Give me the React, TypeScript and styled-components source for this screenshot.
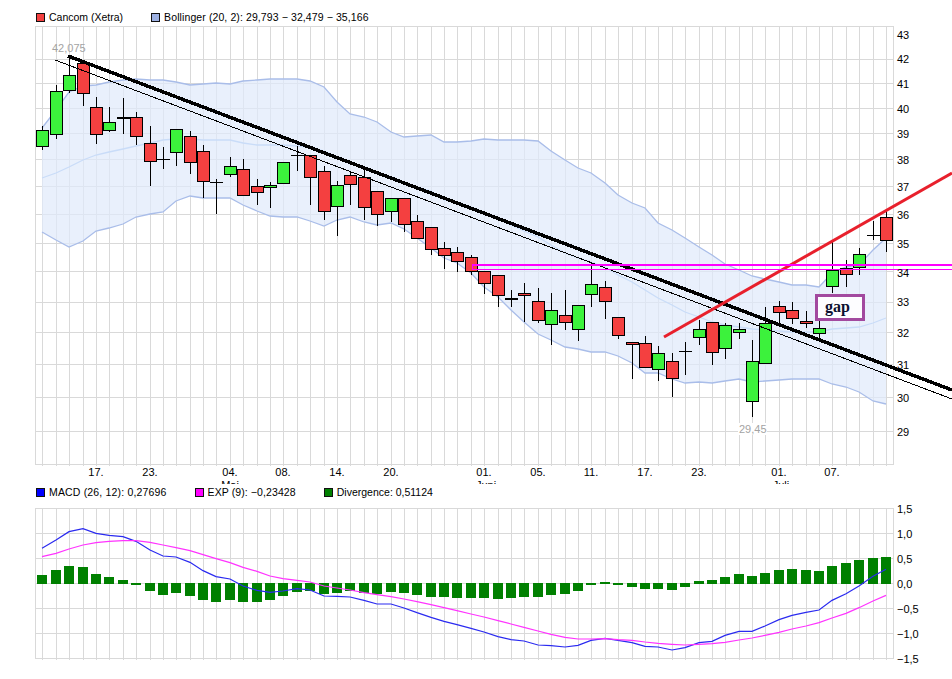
import styled, { createGlobalStyle } from 'styled-components'

const GlobalStyle = createGlobalStyle`
  html, body {
    margin: 0;
    background: #fff;
  }
`

const Page = styled.div`
  width: 952px;
  height: 679px;
  overflow: hidden;
  font-family: "Liberation Sans", Arial, sans-serif;
  font-size: 10.5px;
  color: #000;
`

const LegendRow = styled.div<{ $top: number; $height: number }>`
  display: flex;
  align-items: center;
  gap: 28px;
  box-sizing: border-box;
  height: ${(p) => p.$height}px;
  padding-top: ${(p) => p.$top}px;
  padding-left: 36px;
  position: relative;
`

const LegendItem = styled.div<{ $spacing?: number }>`
  display: flex;
  align-items: center;
  gap: 4px;
  white-space: nowrap;
  letter-spacing: ${(p) => p.$spacing ?? 0}px;
`

const Swatch = styled.span<{ $color: string }>`
  display: block;
  box-sizing: border-box;
  width: 9px;
  height: 9px;
  border: 1px solid #111;
  background: ${(p) => p.$color};
`

const ChartFrame = styled.div`
  position: relative;
`

const ChartSvg = styled.svg`
  display: block;
`

const GridLine = styled.line`
  stroke: #d9d9d9;
  stroke-width: 1;
  shape-rendering: crispEdges;
`

const BandFill = styled.polygon`
  fill: #dfe9fb;
  fill-opacity: 0.7;
  stroke: none;
`

const BandLine = styled.polyline<{ $color: string }>`
  fill: none;
  stroke: ${(p) => p.$color};
  stroke-width: 1.3;
`

const Wick = styled.line`
  stroke: #000;
  stroke-width: 1;
  shape-rendering: crispEdges;
`

const Body = styled.rect<{ $color: string }>`
  fill: ${(p) => p.$color};
  stroke: #000;
  stroke-width: 1;
  shape-rendering: crispEdges;
`

const TrendLine = styled.line<{ $width: number }>`
  stroke: #000;
  stroke-width: ${(p) => p.$width};
  shape-rendering: crispEdges;
`

const RedLine = styled.line`
  stroke: #e8202c;
  stroke-width: 3;
`

const MagentaLine = styled.polyline`
  fill: none;
  stroke: #ff00ff;
  shape-rendering: crispEdges;
`

const IndicatorLine = styled.polyline<{ $color: string }>`
  fill: none;
  stroke: ${(p) => p.$color};
  stroke-width: 1.2;
`

const Bar = styled.rect`
  fill: #008000;
  shape-rendering: crispEdges;
`

const AxisText = styled.text`
  font-family: "Liberation Sans", Arial, sans-serif;
  font-size: 11px;
  fill: #000;
`

const NoteText = styled(AxisText)`
  fill: #a3a3a3;
`

const NoteBack = styled.rect`
  fill: #fff;
`

const GapNote = styled.div`
  position: absolute;
  left: 815px;
  top: 268px;
  box-sizing: border-box;
  width: 50px;
  height: 27px;
  border: 3px solid #a2499f;
  background: #fdfdff;
  display: flex;
  align-items: center;
  justify-content: center;
  font-family: "Liberation Serif", "Times New Roman", serif;
  font-weight: bold;
  font-size: 16px;
  line-height: 1;
  color: #0d1030;
  padding-bottom: 1px;
  padding-right: 5px;
`

const xAt = (i: number) => Math.round(42.4 + 13.39 * i)

const INDEXES = Array.from({ length: 64 }, (_, i) => i)

const PRICE_ROWS = [26, 59, 83, 108, 133, 159, 186, 214, 243, 271, 302, 332, 364, 397, 431, 464]
const PRICE_LABELS: [string, number][] = [
  ['43', 35], ['42', 59], ['41', 84], ['40', 109], ['39', 134], ['38', 160], ['37', 187], ['36', 215],
  ['35', 244], ['34', 273], ['33', 302], ['32', 333], ['31', 365], ['30', 398], ['29', 432],
]
const DATE_LABELS: [string, number][] = [
  ['17.', 4], ['23.', 8], ['04.', 14], ['08.', 18], ['14.', 22], ['20.', 26], ['01.', 33],
  ['05.', 37], ['11.', 41], ['17.', 45], ['23.', 49], ['01.', 55], ['07.', 59],
]
const MONTH_LABELS: [string, number][] = [['Mai', 230], ['Juni', 486], ['Juli', 781]]

const MACD_ROWS = [508, 533, 558, 583, 608, 633, 658]
const MACD_LABELS: [string, number][] = [
  ['1,5', 509], ['1,0', 534], ['0,5', 559], ['0,0', 584], ['−0,5', 609], ['−1,0', 634], ['−1,5', 659],
]

// wick top, wick bottom, body top, body bottom, kind (r red, g green, x cross, d thick doji)
type Candle = [number, number, number, number, 'r' | 'g' | 'x' | 'd']
const CANDLES: Candle[] = [
  [126, 150, 130, 146, 'g'], [85, 139, 91, 134, 'g'], [56, 93, 75, 90, 'g'], [60, 106, 63, 93, 'r'],
  [97, 144, 107, 134, 'r'], [107, 132, 122, 130, 'g'], [98, 134, 117, 117, 'd'], [112, 145, 117, 136, 'r'],
  [126, 186, 143, 161, 'r'], [147, 169, 159, 159, 'x'], [129, 166, 129, 152, 'g'], [131, 174, 136, 162, 'r'],
  [145, 198, 151, 181, 'r'], [179, 214, 182, 182, 'x'], [157, 177, 166, 174, 'g'], [159, 195, 169, 195, 'r'],
  [179, 205, 186, 192, 'r'], [182, 208, 185, 187, 'g'], [162, 183, 162, 183, 'g'], [146, 171, 155, 155, 'x'],
  [155, 205, 155, 177, 'r'], [166, 220, 171, 211, 'r'], [181, 236, 185, 206, 'g'], [172, 205, 175, 184, 'r'],
  [169, 220, 177, 207, 'r'], [191, 226, 191, 214, 'r'], [198, 222, 198, 211, 'g'], [198, 232, 198, 224, 'r'],
  [215, 238, 221, 238, 'r'], [227, 255, 227, 249, 'r'], [242, 269, 248, 255, 'r'], [247, 272, 252, 261, 'r'],
  [255, 275, 257, 271, 'r'], [271, 294, 271, 283, 'r'], [275, 307, 275, 295, 'r'], [290, 307, 298, 299, 'g'],
  [283, 322, 293, 295, 'r'], [288, 323, 301, 320, 'r'], [293, 345, 310, 324, 'g'], [290, 330, 315, 322, 'r'],
  [305, 341, 305, 329, 'g'], [263, 307, 284, 294, 'g'], [281, 319, 287, 301, 'r'], [317, 339, 317, 335, 'r'],
  [342, 379, 342, 344, 'r'], [336, 367, 343, 367, 'r'], [346, 381, 353, 369, 'g'], [353, 397, 361, 378, 'r'],
  [342, 375, 351, 351, 'x'], [320, 345, 329, 337, 'g'], [322, 365, 322, 352, 'r'], [323, 359, 325, 348, 'g'],
  [323, 339, 329, 332, 'g'], [340, 417, 361, 401, 'g'], [307, 364, 323, 363, 'g'], [301, 323, 306, 312, 'r'],
  [302, 324, 310, 318, 'r'], [311, 328, 321, 323, 'r'], [321, 340, 328, 333, 'g'], [240, 293, 270, 286, 'g'],
  [260, 287, 268, 274, 'r'], [248, 275, 254, 267, 'g'], [221, 240, 235, 235, 'x'], [209, 252, 217, 240, 'r'],
]

const UPPER_BAND = [
  128, 110, 92, 86, 85, 82, 80, 79, 80, 80, 82, 85, 84, 83, 84, 81, 80, 79, 79, 79, 81, 87, 102, 114, 117, 122,
  132, 137, 136, 135, 142, 142, 141, 139, 140, 140, 140, 141, 151, 160, 168, 173, 183, 195, 203, 208, 223, 230,
  238, 247, 255, 264, 270, 276, 279, 282, 285, 285, 287, 273, 267, 265, 250, 238,
]
const MIDDLE_BAND = [
  178, 173, 167, 160, 155, 152, 149, 146, 143, 140, 139, 139, 140, 140, 140, 143, 145, 145, 145, 146, 147, 151,
  157, 163, 168, 173, 178, 183, 187, 191, 200, 202, 207, 213, 218, 225, 231, 237, 245, 253, 258, 262, 267, 275,
  282, 290, 298, 305, 312, 317, 322, 325, 327, 329, 330, 331, 332, 332, 332, 329, 328, 327, 323, 318,
]
const LOWER_BAND = [
  232, 240, 247, 241, 231, 228, 224, 217, 214, 212, 201, 196, 198, 198, 198, 205, 211, 216, 217, 217, 221, 226,
  220, 217, 222, 225, 223, 229, 238, 248, 258, 263, 273, 287, 297, 310, 322, 334, 340, 347, 349, 352, 352, 356,
  363, 373, 373, 379, 383, 382, 383, 381, 379, 382, 381, 380, 379, 379, 379, 384, 387, 392, 401, 404,
]

// MACD panel values are read at 3x, so y = 500 + value / 3
const DIVERGENCE = [
  225, 210, 198, 201, 222, 231, 240, 255, 273, 285, 279, 288, 300, 306, 300, 306, 306, 300, 288, 276, 273, 282,
  279, 273, 279, 282, 276, 279, 285, 291, 291, 294, 294, 294, 297, 294, 291, 291, 285, 282, 273, 255, 246, 255,
  261, 267, 267, 270, 261, 243, 240, 231, 222, 228, 219, 210, 207, 210, 213, 198, 189, 180, 174, 171,
]
const MACD = [
  145, 120, 95, 86, 100, 106, 110, 124, 150, 168, 171, 187, 212, 230, 237, 258, 271, 277, 273, 266, 270, 288, 289,
  291, 301, 312, 312, 324, 338, 352, 364, 374, 385, 396, 410, 419, 423, 435, 437, 441, 436, 421, 415, 421, 428,
  439, 441, 450, 443, 428, 424, 406, 394, 394, 378, 359, 346, 337, 330, 301, 281, 258, 229, 208,
]
const EXP = [
  170, 160, 147, 135, 128, 124, 122, 122, 127, 135, 143, 152, 164, 176, 188, 202, 214, 228, 236, 241, 246, 258,
  264, 270, 278, 284, 290, 297, 305, 314, 323, 332, 342, 351, 362, 372, 382, 393, 403, 412, 417, 417, 416, 419,
  421, 426, 430, 433, 435, 433, 431, 427, 420, 414, 406, 397, 387, 378, 368, 354, 340, 323, 303, 286,
]

const toPoints = (ys: number[]) => ys.map((y, i) => `${xAt(i)},${y}`).join(' ')
const toMacdPoints = (ys: number[]) => ys.map((y, i) => `${xAt(i)},${500 + y / 3}`).join(' ')

const bodyColor = { r: '#f44040', g: '#3cf23c' }

const CandleMark = ({ index, candle }: { index: number; candle: Candle }) => {
  const x = xAt(index)
  const [wickTop, wickBottom, top, bottom, kind] = candle
  return (
    <g>
      <Wick x1={x + 0.5} x2={x + 0.5} y1={wickTop} y2={wickBottom} />
      {kind === 'x' || kind === 'd' ? (
        <rect x={x - 6} y={top} width={13} height={kind === 'd' ? 2 : 1} fill="#000" shapeRendering="crispEdges" />
      ) : (
        <Body x={x - 5.5} y={top + 0.5} width={12} height={bottom - top} $color={bodyColor[kind]} />
      )}
    </g>
  )
}

const Grid = ({ rows, top, bottom }: { rows: number[]; top: number; bottom: number }) => (
  <g>
    {rows.map((y) => (
      <GridLine key={y} x1={35} x2={894} y1={y + 0.5} y2={y + 0.5} />
    ))}
    <GridLine x1={35.5} x2={35.5} y1={top} y2={bottom} />
    <GridLine x1={893.5} x2={893.5} y1={top} y2={bottom} />
    {INDEXES.map((i) => (
      <GridLine key={i} x1={xAt(i) + 0.5} x2={xAt(i) + 0.5} y1={top} y2={bottom + 2} />
    ))}
  </g>
)

const PriceChart = () => (
  <ChartFrame>
    <ChartSvg width={952} height={458} viewBox="0 26 952 458">
      <Grid rows={PRICE_ROWS} top={26} bottom={464} />
      <BandFill points={`${toPoints(UPPER_BAND)} ${toPoints(LOWER_BAND).split(' ').reverse().join(' ')}`} />
      <BandLine points={toPoints(MIDDLE_BAND)} $color="#c9dcf8" />
      <BandLine points={toPoints(UPPER_BAND)} $color="#a9bde9" />
      <BandLine points={toPoints(LOWER_BAND)} $color="#a9bde9" />
      {CANDLES.map((candle, i) => (
        <CandleMark key={i} index={i} candle={candle} />
      ))}
      <TrendLine x1={68} y1={56} x2={952} y2={390} $width={3.5} />
      <TrendLine x1={55} y1={60} x2={952} y2={399} $width={1} />
      <RedLine x1={664} y1={337} x2={952} y2={173} />
      <MagentaLine points="952,265 472,265 472,269.5 952,269.5" strokeWidth={1} />
      <MagentaLine points="472,264 952,264" strokeWidth={1} />
      <NoteText x={52} y={52}>42,075</NoteText>
      <NoteBack x={738} y={423} width={29} height={12} />
      <NoteText x={739} y={433}>29,45</NoteText>
      {PRICE_LABELS.map(([label, y]) => (
        <AxisText key={label} x={897} y={y + 4}>{label}</AxisText>
      ))}
      {DATE_LABELS.map(([label, i]) => (
        <AxisText key={i} x={xAt(i)} y={476} textAnchor="middle">{label}</AxisText>
      ))}
      {MONTH_LABELS.map(([label, x]) => (
        <AxisText key={label} x={x} y={488.5} textAnchor="middle">{label}</AxisText>
      ))}
    </ChartSvg>
    <GapNote>gap</GapNote>
  </ChartFrame>
)

const MacdChart = () => (
  <ChartFrame>
    <ChartSvg width={952} height={179} viewBox="0 500 952 179">
      <Grid rows={MACD_ROWS} top={508} bottom={658} />
      {DIVERGENCE.map((value, i) => {
        const y = 500 + value / 3
        return y < 583 ? (
          <Bar key={i} x={xAt(i) - 5} y={y} width={10} height={584 - y} />
        ) : (
          <Bar key={i} x={xAt(i) - 5} y={583} width={10} height={y - 583} />
        )
      })}
      <IndicatorLine points={toMacdPoints(MACD)} $color="#2a2af0" />
      <IndicatorLine points={toMacdPoints(EXP)} $color="#ff33ff" />
      {MACD_LABELS.map(([label, y]) => (
        <AxisText key={label} x={897} y={y + 4}>{label}</AxisText>
      ))}
    </ChartSvg>
  </ChartFrame>
)

export default function App() {
  return (
    <Page>
      <GlobalStyle />
      <LegendRow $top={8} $height={26}>
        <LegendItem>
          <Swatch $color="#f44040" />
          Cancom (Xetra)
        </LegendItem>
        <LegendItem $spacing={0.1}>
          <Swatch $color="#9db1e3" />
          Bollinger (20, 2): 29,793 − 32,479 − 35,166
        </LegendItem>
      </LegendRow>
      <PriceChart />
      <LegendRow $top={0} $height={16}>
        <LegendItem $spacing={0.17}>
          <Swatch $color="#0000ff" />
          MACD (26, 12): 0,27696
        </LegendItem>
        <LegendItem $spacing={0.1}>
          <Swatch $color="#ff00ff" />
          EXP (9): −0,23428
        </LegendItem>
        <LegendItem>
          <Swatch $color="#008000" />
          Divergence: 0,51124
        </LegendItem>
      </LegendRow>
      <MacdChart />
    </Page>
  )
}
